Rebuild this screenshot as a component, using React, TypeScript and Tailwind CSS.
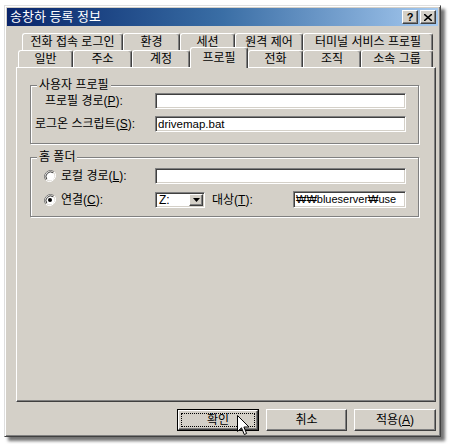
const face = "font-['Liberation_Sans','Noto_Sans_CJK_KR',sans-serif]";

const raised =
  "border border-t-white border-l-white border-r-[#404040] border-b-[#404040] shadow-[inset_-1px_-1px_0_#808080]";
const sunken =
  "bg-white border border-t-[#808080] border-l-[#808080] border-r-white border-b-white shadow-[inset_1px_1px_0_#404040,inset_-1px_-1px_0_#d4d0c8]";

const backTabs = [
  { label: "전화 접속 로그인", w: "w-[101px]" },
  { label: "환경", w: "w-[57px]" },
  { label: "세션", w: "w-[55px]" },
  { label: "원격 제어", w: "w-[68px]" },
  { label: "터미널 서비스 프로필", w: "w-[130px]" },
];

const frontTabs = [
  { label: "일반", w: "w-[55px]" },
  { label: "주소", w: "w-[59px]" },
  { label: "계정", w: "w-[58px]" },
  { label: "프로필", w: "w-[58px]", active: true },
  { label: "전화", w: "w-[55px]" },
  { label: "조직", w: "w-[58px]" },
  { label: "소속 그룹", w: "w-[72px]" },
];

function Tab({ label, w, active }: { label: string; w: string; active?: boolean }) {
  return (
    <div
      className={
        w +
        " flex justify-center rounded-t-[3px] border-t border-l border-t-white border-l-white border-r border-r-[#404040] shadow-[inset_-1px_0_0_#808080] bg-[#d4d0c8] " +
        (active ? "relative top-[1px] h-[21px] pt-[3px] z-10" : "h-[17px] pt-[1px]")
      }
    >
      <span className="text-[12px] leading-[14px] text-black">{label}</span>
    </div>
  );
}

function Mn({ pre, key1, post }: { pre: string; key1: string; post: string }) {
  return (
    <span>
      {pre}(<span className="underline underline-offset-1">{key1}</span>){post}
    </span>
  );
}

function Radio({ on }: { on?: boolean }) {
  return (
    <svg width="12" height="12" viewBox="0 0 12 12">
      <path d="M10.2 1.8 A6 6 0 0 0 1.8 10.2" fill="none" stroke="#808080" strokeWidth="1" />
      <path d="M1.8 10.2 A6 6 0 0 0 10.2 1.8" fill="none" stroke="#ffffff" strokeWidth="1" />
      <circle cx="6" cy="6" r="4.6" fill="#ffffff" />
      <path d="M9.2 2.8 A4.6 4.6 0 0 0 2.8 9.2" fill="none" stroke="#404040" strokeWidth="1" />
      {on && <circle cx="6" cy="6" r="2" fill="#000000" />}
    </svg>
  );
}

function Group({ title, className, children }: { title: string; className: string; children: React.ReactNode }) {
  return (
    <div
      className={
        "relative border border-[#808080] shadow-[inset_1px_1px_0_#fff,1px_1px_0_#fff] " + className
      }
    >
      <span className="absolute -top-[8px] left-[6px] bg-[#d4d0c8] px-[2px] text-[12px] leading-[14px]">
        {title}
      </span>
      {children}
    </div>
  );
}

function Cursor() {
  return (
    <svg
      className="absolute left-[59px] top-[5px] z-20"
      width="13"
      height="21"
      viewBox="0 0 13 21"
    >
      <path
        d="M0.5 0.5 L0.5 16.5 L4.5 12.8 L7.3 19.5 L9.6 18.5 L6.9 12 L12 12 Z"
        fill="#ffffff"
        stroke="#000000"
        strokeWidth="1"
        strokeLinejoin="round"
      />
    </svg>
  );
}

export default function App() {
  return (
    <div className={face + " w-[452px] h-[444px] bg-white pt-[5px] pl-[4px] text-black"}>
      <div className="w-[437px] h-[432px] bg-[#d4d0c8] border border-t-[#dfdfdf] border-l-[#dfdfdf] border-r-[#404040] border-b-[#404040] shadow-[inset_1px_1px_0_#fff,inset_-1px_-1px_0_#808080,4px_4px_3px_rgba(0,0,0,0.55)] p-[2px] flex flex-col">
        {/* title bar */}
        <div className="h-[18px] flex items-center bg-gradient-to-r from-[#0a246a] via-[#3a6ea5] to-[#a6caf0] pl-[3px] pr-[2px]">
          <span className="flex-1 text-white text-[13px] leading-[16px]">송창하 등록 정보</span>
          <div className="flex gap-[2px]">
            <div className={raised + " w-[16px] h-[14px] bg-[#d4d0c8] flex items-center justify-center text-[11px] font-bold leading-none"}>
              ?
            </div>
            <div className={raised + " w-[16px] h-[14px] bg-[#d4d0c8] flex items-center justify-center"}>
              <svg width="8" height="7" viewBox="0 0 8 7">
                <path d="M0 0 L8 7 M8 0 L0 7" stroke="#000" strokeWidth="1.6" />
              </svg>
            </div>
          </div>
        </div>

        {/* body */}
        <div className="flex flex-col pl-[9px] pr-[2px] pt-[7px]">
          <div className="flex ml-[6px]">
            {backTabs.map((t) => (
              <Tab key={t.label} label={t.label} w={t.w} />
            ))}
          </div>
          <div className="flex items-end ml-[2px] h-[17px]">
            {frontTabs.map((t) => (
              <Tab key={t.label} label={t.label} w={t.w} active={t.active} />
            ))}
          </div>

          {/* panel */}
          <div className="h-[335px] border border-t-white border-l-white border-r-[#404040] border-b-[#404040] shadow-[inset_-1px_-1px_0_#808080] pl-[13px] pr-[16px] pt-[17px] text-[12px] leading-[14px]">
            <Group title="사용자 프로필" className="h-[59px] pt-[7px]">
              <div className="flex items-center h-[16px]">
                <span className="w-[124px] pl-[14px]">
                  <Mn pre="프로필 경로" key1="P" post=":" />
                </span>
                <div className={sunken + " w-[251px] h-[16px]"} />
              </div>
              <div className="flex items-center h-[16px] mt-[7px]">
                <span className="w-[124px] pl-[4px]">
                  <Mn pre="로그온 스크립트" key1="S" post=":" />
                </span>
                <div className={sunken + " w-[251px] h-[16px] pl-[2px] text-[11.5px] leading-[14px] flex items-center"}>
                  drivemap.bat
                </div>
              </div>
            </Group>

            <Group title="홈 폴더" className="mt-[13px] h-[60px] pt-[10px]">
              <div className="flex items-center h-[16px]">
                <span className="w-[124px] pl-[13px] flex items-center gap-[5px]">
                  <Radio />
                  <Mn pre="로컬 경로" key1="L" post=":" />
                </span>
                <div className={sunken + " w-[251px] h-[16px]"} />
              </div>
              <div className="flex items-center h-[17px] mt-[7px]">
                <span className="w-[124px] pl-[13px] flex items-center gap-[5px]">
                  <Radio on />
                  <Mn pre="연결" key1="C" post=":" />
                </span>
                <div className={sunken + " w-[50px] h-[16px] flex items-center justify-between pl-[3px] pr-[1px]"}>
                  <span className="text-[12px] leading-[14px]">Z:</span>
                  <div className={raised + " w-[14px] h-[12px] bg-[#d4d0c8] flex items-center justify-center"}>
                    <svg width="7" height="4" viewBox="0 0 7 4">
                      <path d="M0 0 L7 0 L3.5 4 Z" fill="#000" />
                    </svg>
                  </div>
                </div>
                <span className="ml-[7px] w-[81px]">
                  <Mn pre="대상" key1="T" post=":" />
                </span>
                <div className={sunken + " w-[113px] h-[17px] pl-[2px] overflow-hidden whitespace-nowrap text-[11px] leading-[15px] flex items-center"}>
                  ₩₩blueserver₩use
                </div>
              </div>
            </Group>
          </div>

          {/* buttons */}
          <div className="flex justify-end gap-[7px] mt-[7px] text-[12px] leading-[14px]">
            <div className="relative w-[82px] h-[22px] border border-black">
              <div className={raised + " w-full h-full bg-[#d4d0c8] p-[2px]"}>
                <div className="w-full h-full border border-dotted border-black flex items-center justify-center">
                  확인
                </div>
              </div>
              <Cursor />
            </div>
            <div className={raised + " w-[81px] h-[22px] bg-[#d4d0c8] flex items-center justify-center"}>
              취소
            </div>
            <div className={raised + " w-[82px] h-[22px] bg-[#d4d0c8] flex items-center justify-center"}>
              <Mn pre="적용" key1="A" post="" />
            </div>
          </div>
        </div>
      </div>
    </div>
  );
}
